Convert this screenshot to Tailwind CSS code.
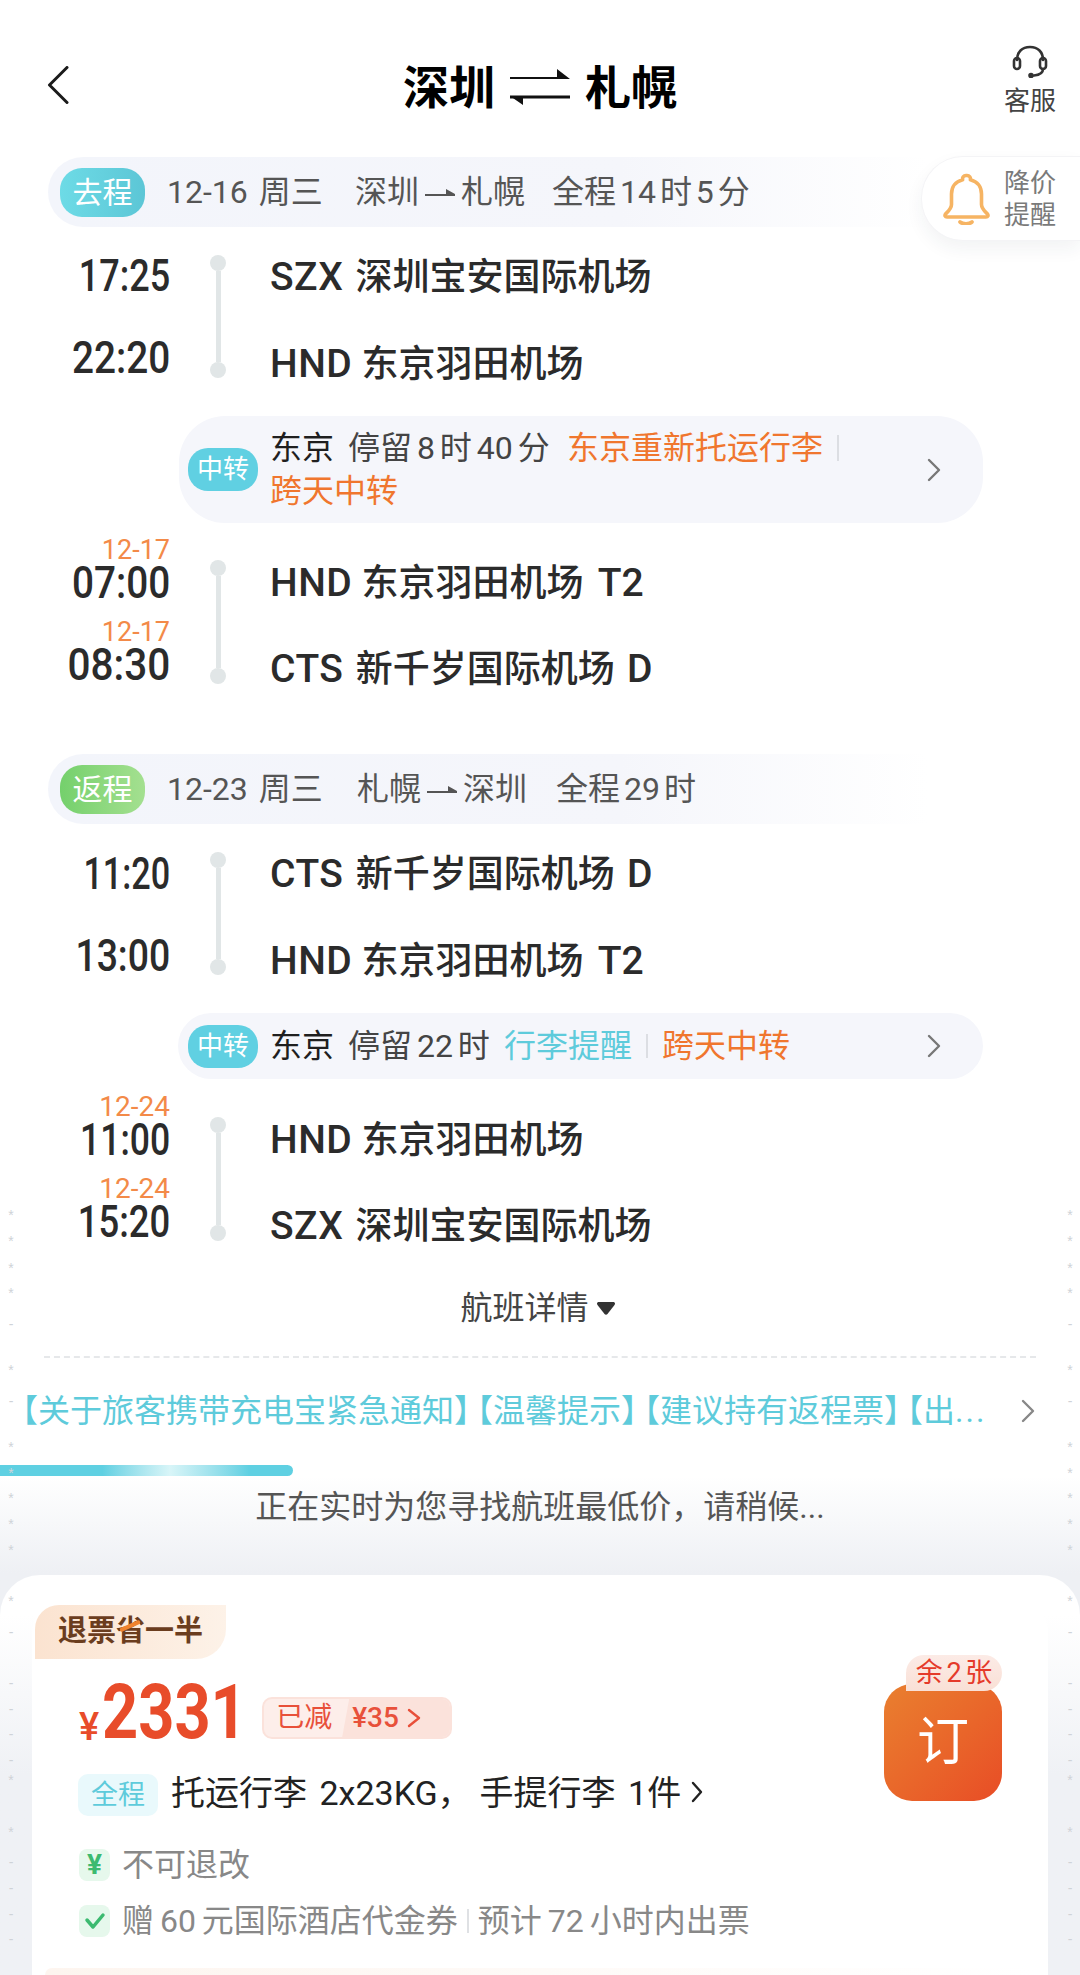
<!DOCTYPE html>
<html lang="zh-CN">
  <head>
    <meta charset="UTF-8" />
    <meta name="viewport" content="width=device-width, initial-scale=1.0" />
    <title>深圳 札幌</title>
    <script src="https://cdn.jsdelivr.net/npm/@tailwindcss/browser@4"></script>
  </head>

  <body class="bg-white">
    <div id="page" class="relative w-[1080px] h-[1975px] overflow-hidden bg-white text-[#2b2b2b] font-['Roboto','Noto_Sans_CJK_SC',sans-serif]">
      <!-- header -->
      <header class="grid grid-cols-[1fr_auto_1fr] h-[157px]">
        <div class="pl-[47px] pt-[66px]">
          <svg width="22" height="38" viewBox="0 0 22 38" fill="none" stroke="#1a1a1a" stroke-width="3" stroke-linecap="round" stroke-linejoin="round"><path d="M20 1.5 2.5 19 20 36.5" /></svg>
        </div>
        <div class="flex items-center gap-[15px] h-[50px] mt-[63px] text-[46px] leading-[50px] font-bold text-black">
          <span>深圳</span>
          <svg width="60" height="38" viewBox="0 0 60 38" fill="#111"><path d="M0 8h47L47 0l13 10H0z" /><path d="M60 27H13l0 9L0 27z" /><rect x="0" y="26.5" width="60" height="3" /></svg>
          <span>札幌</span>
        </div>
        <div class="flex flex-col items-end pr-[24px] pt-[45px]">
          <div class="flex flex-col items-center w-[52px]">
            <svg width="36" height="33" viewBox="0 0 36 33" fill="none" stroke="#333" stroke-width="2.6" stroke-linecap="round"><path d="M5 15C5 7 10 2 18 2s13 5 13 13" /><rect x="2" y="13" width="6" height="11" rx="3" /><rect x="28" y="13" width="6" height="11" rx="3" /><path d="M31 24c0 4-4 6-9 6.500" /><circle cx="19" cy="30.500" r="1.500" fill="#333" /></svg>
            <span class="text-[26px] leading-[30px] mt-[8px] text-[#444]">客服</span>
          </div>
        </div>
      </header>

      <!-- price alert, floats over the trip bar -->
      <div class="absolute right-0 top-[156px] z-10 flex items-center w-[159px] h-[85px] rounded-l-[42px] bg-white border border-r-0 border-[#f4f4f6] shadow-[0_8px_18px_rgba(40,50,70,0.06)]">
        <svg class="ml-[20px]" width="48" height="52" viewBox="0 0 48 52" fill="none" stroke="#f6b463" stroke-width="3.600" stroke-linecap="round" stroke-linejoin="round"><path d="M24 2.500c-2.500 0-3.800 2-3.400 4.300C13.500 8.500 9.500 14 9.500 21v10.500c0 4-3 6.500-6 9.500-1 1.500-.5 3 1.500 3h39c2 0 2.500-1.500 1.500-3-3-3-6-5.500-6-9.500V21c0-7-4-12.500-11.100-14.200.4-2.300-.9-4.300-3.400-4.300z" /><path d="M18 49c3 2.500 9 2.500 12 0" /></svg>
        <div class="ml-[14px] text-[26px] leading-[32px] text-[#7a7a7a]">降价<br />提醒</div>
      </div>

      <!-- outbound -->
      <section>
        <div class="flex items-center ml-[48px] w-[880px] h-[70px] rounded-l-[35px] bg-linear-to-r from-[#f3f5fb] via-[#f5f6fb] via-65% to-white text-[32px] text-[#555]">
          <span class="flex items-center justify-center ml-[12px] w-[85px] h-[49px] rounded-[22px] bg-linear-to-r from-[#6ddbe6] to-[#5cc6d6] text-[30px] text-white">去程</span>
          <span class="ml-[22px] w-[188px] whitespace-nowrap [word-spacing:3px]">12-16 周三</span>
          <span class="flex items-center">深圳
            <svg class="mx-[6px]" width="30" height="14" viewBox="0 0 30 14" fill="#555"><path d="M0 9h30v2H0zM21 4l9 5h-9z" /></svg>
            札幌</span>
          <span class="ml-[27px] whitespace-nowrap [word-spacing:-4px]">全程 14 时 5 分</span>
        </div>

        <div class="flex mt-[28px] h-[123px]">
          <div class="w-[170px] -mt-[1px] flex flex-col gap-[38px] items-end text-[45px] leading-[44px] font-medium">
            <span class="origin-right scale-x-[0.8]">17:25</span>
            <span class="origin-right scale-x-[0.86]">22:20</span>
          </div>
          <div class="flex flex-col items-center ml-[40px] w-[16px]">
            <i class="block size-[16px] rounded-full bg-[#e1e6e7]"></i>
            <i class="block flex-1 w-[5px] bg-[#e1e6e7]"></i>
            <i class="block size-[16px] rounded-full bg-[#e1e6e7]"></i>
          </div>
          <div class="ml-[44px] flex flex-col gap-[42px] text-[37px] leading-[44px] font-medium">
            <span class="[word-spacing:3px]"><span class="text-[39px] tracking-[0.5px]">SZX</span> 深圳宝安国际机场</span>
            <span><span class="text-[39px] tracking-[0.5px]">HND</span> 东京羽田机场</span>
          </div>
        </div>

        <div class="flex items-center mt-[38px] ml-[179px] w-[804px] h-[107px] rounded-[46px] bg-[#f5f6fb]">
          <span class="flex items-center justify-center ml-[9px] w-[70px] h-[43px] rounded-[20px] bg-[#60d0e2] text-[26px] text-white">中转</span>
          <div class="ml-[12px] text-[32px] leading-[43px]">
            <div class="flex items-center whitespace-nowrap">
              <span class="text-[#1f1f1f] w-[78px]">东京</span>
              <span class="text-[#444] w-[219px] [word-spacing:-3px]">停留 8 时 40 分</span>
              <span class="text-[#f0762e]">东京重新托运行李</span>
              <i class="block ml-[14px] w-[2px] h-[26px] bg-[#dcdee3]"></i>
            </div>
            <div class="text-[#f0762e]">跨天中转</div>
          </div>
          <svg class="ml-auto mr-[42px]" width="14" height="24" viewBox="0 0 14 24" fill="none" stroke="#777" stroke-width="2.400" stroke-linecap="round" stroke-linejoin="round"><path d="M2 2l10 10L2 22" /></svg>
        </div>

        <div class="flex mt-[37px] h-[124px]">
          <div class="w-[170px] -mt-[21px] flex flex-col items-end font-medium">
            <span class="text-[27px] leading-[22px] h-[22px] font-normal text-[#f38a48]">12-17</span>
            <span class="text-[45px] leading-[44px] origin-right scale-x-[0.86]">07:00</span>
            <span class="mt-[16px] text-[27px] leading-[22px] h-[22px] font-normal text-[#f38a48]">12-17</span>
            <span class="text-[45px] leading-[44px] origin-right scale-x-[0.9]">08:30</span>
          </div>
          <div class="flex flex-col items-center ml-[40px] w-[16px]">
            <i class="block size-[16px] rounded-full bg-[#e1e6e7]"></i>
            <i class="block flex-1 w-[5px] bg-[#e1e6e7]"></i>
            <i class="block size-[16px] rounded-full bg-[#e1e6e7]"></i>
          </div>
          <div class="ml-[44px] pt-[1px] flex flex-col gap-[41px] text-[37px] leading-[44px] font-medium">
            <span><span class="text-[39px] tracking-[0.5px]">HND</span> 东京羽田机场 <span class="ml-[5px] text-[39px]">T2</span></span>
            <span class="[word-spacing:3px]"><span class="text-[39px] tracking-[0.5px]">CTS</span> 新千岁国际机场 <span class="text-[39px]">D</span></span>
          </div>
        </div>
      </section>

      <!-- return -->
      <section class="mt-[70px]">
        <div class="flex items-center ml-[48px] w-[880px] h-[70px] rounded-l-[35px] bg-linear-to-r from-[#f3f5fb] via-[#f5f6fb] via-65% to-white text-[32px] text-[#555]">
          <span class="flex items-center justify-center ml-[12px] w-[85px] h-[49px] rounded-[22px] bg-linear-to-r from-[#74d06c] to-[#a4e090] text-[30px] text-white">返程</span>
          <span class="ml-[22px] w-[190px] whitespace-nowrap [word-spacing:3px]">12-23 周三</span>
          <span class="flex items-center">札幌
            <svg class="mx-[6px]" width="30" height="14" viewBox="0 0 30 14" fill="#555"><path d="M0 9h30v2H0zM21 4l9 5h-9z" /></svg>
            深圳</span>
          <span class="ml-[29px] whitespace-nowrap [word-spacing:-4px]">全程 29 时</span>
        </div>

        <div class="flex mt-[28px] h-[123px]">
          <div class="w-[170px] flex flex-col gap-[38px] items-end text-[45px] leading-[44px] font-medium">
            <span class="origin-right scale-x-[0.76]">11:20</span>
            <span class="origin-right scale-x-[0.83]">13:00</span>
          </div>
          <div class="flex flex-col items-center ml-[40px] w-[16px]">
            <i class="block size-[16px] rounded-full bg-[#e1e6e7]"></i>
            <i class="block flex-1 w-[5px] bg-[#e1e6e7]"></i>
            <i class="block size-[16px] rounded-full bg-[#e1e6e7]"></i>
          </div>
          <div class="ml-[44px] flex flex-col gap-[42px] text-[37px] leading-[44px] font-medium">
            <span class="[word-spacing:3px]"><span class="text-[39px] tracking-[0.5px]">CTS</span> 新千岁国际机场 <span class="text-[39px]">D</span></span>
            <span><span class="text-[39px] tracking-[0.5px]">HND</span> 东京羽田机场 <span class="ml-[5px] text-[39px]">T2</span></span>
          </div>
        </div>

        <div class="flex items-center mt-[38px] ml-[178px] w-[805px] h-[66px] rounded-[33px] bg-[#f5f6fb] text-[32px] whitespace-nowrap">
          <span class="flex items-center justify-center ml-[10px] w-[70px] h-[43px] rounded-[20px] bg-[#60d0e2] text-[26px] text-white">中转</span>
          <span class="ml-[12px] w-[78px] text-[#1f1f1f]">东京</span>
          <span class="w-[156px] text-[#444] [word-spacing:-3px]">停留 22 时</span>
          <span class="text-[#5ecbdb]">行李提醒</span>
          <i class="block mx-[14px] w-[2px] h-[24px] bg-[#dcdee3]"></i>
          <span class="text-[#f0762e]">跨天中转</span>
          <svg class="ml-auto mr-[42px]" width="14" height="24" viewBox="0 0 14 24" fill="none" stroke="#777" stroke-width="2.400" stroke-linecap="round" stroke-linejoin="round"><path d="M2 2l10 10L2 22" /></svg>
        </div>

        <div class="flex mt-[38px] h-[124px]">
          <div class="w-[170px] -mt-[21px] flex flex-col items-end font-medium">
            <span class="text-[28px] leading-[22px] h-[22px] font-normal text-[#f38a48]">12-24</span>
            <span class="text-[45px] leading-[44px] origin-right scale-x-[0.79]">11:00</span>
            <span class="mt-[16px] text-[28px] leading-[22px] h-[22px] font-normal text-[#f38a48]">12-24</span>
            <span class="text-[45px] leading-[44px] origin-right scale-x-[0.81]">15:20</span>
          </div>
          <div class="flex flex-col items-center ml-[40px] w-[16px]">
            <i class="block size-[16px] rounded-full bg-[#e1e6e7]"></i>
            <i class="block flex-1 w-[5px] bg-[#e1e6e7]"></i>
            <i class="block size-[16px] rounded-full bg-[#e1e6e7]"></i>
          </div>
          <div class="ml-[44px] pt-[1px] flex flex-col gap-[41px] text-[37px] leading-[44px] font-medium">
            <span><span class="text-[39px] tracking-[0.5px]">HND</span> 东京羽田机场</span>
            <span class="[word-spacing:3px]"><span class="text-[39px] tracking-[0.5px]">SZX</span> 深圳宝安国际机场</span>
          </div>
        </div>
      </section>

      <!-- details toggle + notice -->
      <div class="flex items-center justify-center gap-[8px] mt-[45px] pr-[5px] h-[44px] text-[32px] text-[#444]">
        <span>航班详情</span>
        <svg width="18" height="13" viewBox="0 0 18 13" fill="#333"><path d="M2 0h14c2 0 2.500 1.500 1.500 3L10.500 12c-.8 1-2.200 1-3 0L.5 3C-.5 1.500 0 0 2 0z" /></svg>
      </div>
      <div class="mt-[26px] mx-[44px] border-t-2 border-dashed border-[#e6e8ea]"></div>
      <div class="flex items-center mt-[31px] pl-[6px] h-[44px] text-[32px] text-[#5ecbdb] whitespace-nowrap">
        <span>【关于旅客携带充电宝紧急通知<span class="tracking-[-9px]">】</span>【温馨提示<span class="tracking-[-9px]">】</span>【建议持有返程票<span class="tracking-[-9px]">】</span>【出<span class="tracking-[2px]">...</span></span>
        <svg class="absolute left-[1021px]" width="14" height="24" viewBox="0 0 14 24" fill="none" stroke="#888" stroke-width="2.400" stroke-linecap="round" stroke-linejoin="round"><path d="M2 2l10 10L2 22" /></svg>
      </div>

      <!-- loading -->
      <div class="mt-[32px] w-[293px] h-[11px] rounded-r-full bg-linear-to-r from-[#5fd0e2] from-35% via-[#d8f5f8] via-58% to-[#5fd0e2] to-85%"></div>
      <div class="bg-linear-to-b from-white to-[#eef0f4] to-20% h-[489px]">
        <div class="pt-[9px] h-[53px] text-center text-[32px] leading-[44px] text-[#555]">正在实时为您寻找航班最低价，请稍候...</div>

        <!-- fare sheet -->
        <div class="mt-[46px] h-[400px] rounded-t-[40px] bg-linear-to-b from-white from-10% to-[#eff1f5] to-50% pt-[27px] px-[32px]">
          <div class="flex flex-col h-[373px] rounded-t-[30px] bg-white">
            <div class="flex flex-1">
              <div class="flex-1">
                <div class="relative flex items-center justify-center ml-[3px] mt-[3px] w-[191px] h-[54px] rounded-tl-[24px] rounded-br-[30px] bg-linear-to-r from-[#fbe3d0] to-[#fdf2e8] text-[29px] font-bold text-[#6b3d1e]">
                  退票省一半
                  <i class="absolute left-[84px] top-[19px] block w-[22px] h-[4px] -rotate-[24deg] rounded-full bg-[#f0832e]"></i>
                </div>

                <div class="flex items-end ml-[47px] mt-[25px] h-[59px]">
                  <span class="-mb-[2px] text-[38px] leading-[36px] font-medium text-[#e84c2a]">¥</span>
                  <span class="ml-[3px] block w-[136px] text-[76px] leading-[62px] font-bold text-[#e84c2a] origin-left scale-x-[0.83] whitespace-nowrap">2331</span>
                  <div class="flex items-center ml-[24px] mb-[4px] w-[190px] h-[42px] rounded-[10px] border-2 border-[#fbe2db] bg-[#fdeeea] overflow-hidden">
                    <span class="w-[78px] pl-[12px] text-[28px] text-[#e8503a] whitespace-nowrap">已减</span>
                    <span class="flex items-center flex-1 gap-[8px] h-full pl-[10px] bg-[#fbe2db] text-[28px] font-medium text-[#e8503a] [clip-path:polygon(7px_0,100%_0,100%_100%,0_100%)]">¥35
                      <svg width="14" height="22" viewBox="0 0 14 22" fill="none" stroke="#e8503a" stroke-width="2.400" stroke-linecap="round" stroke-linejoin="round"><path d="M2 3l10 8-10 8" /></svg>
                    </span>
                  </div>
                </div>

                <div class="flex items-center ml-[46px] mt-[31px] h-[42px]">
                  <span class="flex items-center justify-center w-[80px] h-[42px] rounded-[10px] bg-[#e9f9fc] text-[27px] text-[#5ecbdb]">全程</span>
                  <span class="ml-[13px] -mt-[4px] text-[34px] text-[#222] whitespace-nowrap [word-spacing:4px]">托运行李 2x23KG<span class="mr-[8px]">，</span>手提行李 1件</span>
                  <svg class="ml-[10px] -mt-[6px]" width="12" height="22" viewBox="0 0 12 22" fill="none" stroke="#222" stroke-width="2.400" stroke-linecap="round" stroke-linejoin="round"><path d="M2 2l8 9-8 9" /></svg>
                </div>

                <div class="flex items-center ml-[47px] mt-[33px] h-[32px] text-[32px] text-[#888]">
                  <span class="flex items-center justify-center w-[31px] h-[32px] rounded-[8px] bg-[#e6f8ec] text-[28px] font-bold text-[#3cba70]">¥</span>
                  <span class="ml-[12px]">不可退改</span>
                </div>
                <div class="flex items-center ml-[47px] mt-[24px] h-[32px] text-[32px] text-[#888] whitespace-nowrap [word-spacing:-2px]">
                  <span class="flex items-center justify-center w-[31px] h-[32px] rounded-[8px] bg-[#e6f8ec]">
                    <svg width="22" height="18" viewBox="0 0 22 18" fill="none" stroke="#3cba70" stroke-width="3.500" stroke-linecap="round" stroke-linejoin="round"><path d="M3 8l6 7L19 3" /></svg>
                  </span>
                  <span class="ml-[12px]">赠 60 元国际酒店代金券</span>
                  <i class="block mx-[9px] w-[2px] h-[24px] bg-[#dfe1e4]"></i>
                  <span>预计 72 小时内出票</span>
                </div>
              </div>

              <!-- book button -->
              <div class="flex flex-col items-end mr-[46px] mt-[53px]">
                <span class="relative z-10 flex items-center justify-center w-[96px] h-[36px] -mb-[7px] rounded-t-[18px] rounded-br-[18px] bg-linear-to-b from-[#fcebe6] to-[#f9e0d6] text-[27px] text-[#e53a2a] whitespace-nowrap [word-spacing:-3px]">余 2 张</span>
                <button class="flex items-center justify-center w-[118px] h-[117px] rounded-[28px] bg-linear-to-br from-[#e97f2f] to-[#e84c26] text-[52px] text-white">订</button>
              </div>
            </div>
            <div class="mx-[13px] h-[7px] rounded-t-[18px] bg-linear-to-r from-[#fdf5ef] to-white"></div>
          </div>
        </div>
      </div>
    </div>

    <script>
      const marks = [
        [1213, "*"], [1239, "*"], [1266, "*"], [1291, "*"], [1322, "-"], [1368, "*"], [1399, "-"],
        [1445, "*"], [1471, "*"], [1496, "*"], [1522, "*"], [1548, "*"], [1599, "*"], [1630, "-"],
        [1681, "-"], [1707, "-"], [1732, "-"], [1758, "-"], [1778, "*"], [1830, "*"], [1860, "-"],
        [1886, "-"], [1912, "-"], [1937, "-"],
      ];
      const page = document.getElementById("page");
      marks.forEach(([y, ch]) => {
        [7, 1066].forEach((x) => {
          const el = document.createElement("span");
          el.className = "absolute z-20 w-[8px] text-center text-[14px] leading-[14px] text-[#cfd3d8] font-['Liberation_Sans',sans-serif]";
          el.style.left = x + "px";
          el.style.top = y - 5 + "px";
          el.textContent = ch;
          page.appendChild(el);
        });
      });
    </script>
  </body>
</html>
